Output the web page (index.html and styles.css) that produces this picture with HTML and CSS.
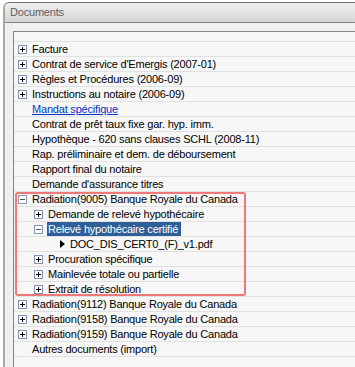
FILE: index.html
```html
<!DOCTYPE html>
<html>
<head>
<meta charset="utf-8">
<link rel="stylesheet" href="styles.css">
</head>
<body>
<div class="window">
  <div class="titlebar">Documents</div>
  <div class="content">
    <div class="tree">
      <div class="row head"></div>
      <div class="row l0"><span class="exp plus"></span><span class="label">Facture</span></div>
      <div class="row l0"><span class="exp plus"></span><span class="label">Contrat de service d'Emergis (2007-01)</span></div>
      <div class="row l0"><span class="exp plus"></span><span class="label">Règles et Procédures (2006-09)</span></div>
      <div class="row l0"><span class="exp plus"></span><span class="label">Instructions au notaire (2006-09)</span></div>
      <div class="row l0 leaf"><span class="label link">Mandat spécifique</span></div>
      <div class="row l0 leaf"><span class="label">Contrat de prêt taux fixe gar. hyp. imm.</span></div>
      <div class="row l0 leaf"><span class="label">Hypothèque - 620 sans clauses SCHL (2008-11)</span></div>
      <div class="row l0 leaf"><span class="label">Rap. préliminaire et dem. de déboursement</span></div>
      <div class="row l0 leaf"><span class="label">Rapport final du notaire</span></div>
      <div class="row l0 leaf"><span class="label">Demande d'assurance titres</span></div>
      <div class="group">
        <div class="row l0"><span class="exp minus"></span><span class="label">Radiation(9005) Banque Royale du Canada</span></div>
        <div class="row l1"><span class="exp plus"></span><span class="label">Demande de relevé hypothécaire</span></div>
        <div class="row l1"><span class="exp minus"></span><span class="label selected">Relevé hypothécaire certifié</span></div>
        <div class="row l2"><span class="arrow"></span><span class="label">DOC_DIS_CERT0_(F)_v1.pdf</span></div>
        <div class="row l1"><span class="exp plus"></span><span class="label">Procuration spécifique</span></div>
        <div class="row l1"><span class="exp plus"></span><span class="label">Mainlevée totale ou partielle</span></div>
        <div class="row l1"><span class="exp plus"></span><span class="label">Extrait de résolution</span></div>
      </div>
      <div class="row l0"><span class="exp plus"></span><span class="label">Radiation(9112) Banque Royale du Canada</span></div>
      <div class="row l0"><span class="exp plus"></span><span class="label">Radiation(9158) Banque Royale du Canada</span></div>
      <div class="row l0"><span class="exp plus"></span><span class="label">Radiation(9159) Banque Royale du Canada</span></div>
      <div class="row l0 leaf"><span class="label">Autres documents (import)</span></div>
    </div>
  </div>
</div>
</body>
</html>
```
FILE: styles.css
```css
html, body {
  margin: 0;
  padding: 0;
  background: #ffffff;
  width: 355px;
  height: 367px;
  overflow: hidden;
}

.window {
  margin: 2px 0 0 3px;
  width: 360px;
  height: 370px;
  border-top: 1px solid #707070;
  border-left: 2px solid #a8a8a8;
  border-top-left-radius: 6px;
  background: #f0f0f0;
  font-family: "Liberation Sans", Arial, sans-serif;
  font-size: 11px;
  letter-spacing: -0.2px;
}

.titlebar {
  height: 19px;
  line-height: 19px;
  padding-left: 5px;
  color: #5e5e5e;
  background: linear-gradient(#eeeeee, #e2e2e2 50%, #d6d6d6);
  border-bottom: 1px solid #858585;
  border-top-left-radius: 5px;
}

.content {
  padding: 8px 0 0 8px;
}

.tree {
  border-top: 1px solid #858585;
  border-left: 1px solid #858585;
  background: #f7f7f7;
  height: 340px;
  color: #000;
}

.row {
  height: 14px;
  border-bottom: 1px solid #e1e1e1;
  display: flex;
  align-items: center;
  white-space: nowrap;
}

.row.head {
  height: 9px;
}

.l0 { padding-left: 4px; }
.l1 { padding-left: 20px; }
.l2 { padding-left: 46px; }
.l0.leaf { padding-left: 17px; }

.exp {
  box-sizing: border-box;
  width: 9px;
  height: 9px;
  border: 1px solid #7f93b0;
  background: #ffffff;
  margin-right: 4px;
  position: relative;
  flex: none;
}

.exp::before {
  content: "";
  position: absolute;
  left: 1px;
  top: 3px;
  width: 5px;
  height: 1px;
  background: #000;
}

.exp.plus::after {
  content: "";
  position: absolute;
  left: 3px;
  top: 1px;
  width: 1px;
  height: 5px;
  background: #000;
}

.exp.minus {
  border-color: #8a9bb5;
}

.exp.minus::before {
  background: #555;
}

.arrow {
  width: 0;
  height: 0;
  border-top: 4px solid transparent;
  border-bottom: 4px solid transparent;
  border-left: 5px solid #000;
  margin-right: 4px;
  flex: none;
}

.label {
  padding: 0 1px;
  line-height: 14px;
}

.link {
  color: #0033cc;
  text-decoration: underline;
}

.selected {
  background: #2d5f99;
  color: #ffffff;
  padding: 0 3px 0 1px;
  height: 14px;
}

.group {
  position: relative;
}

.group::after {
  content: "";
  position: absolute;
  left: 1px;
  top: 0;
  bottom: 1px;
  width: 227px;
  border: 2px solid #f17878;
  border-radius: 3px;
}
```
